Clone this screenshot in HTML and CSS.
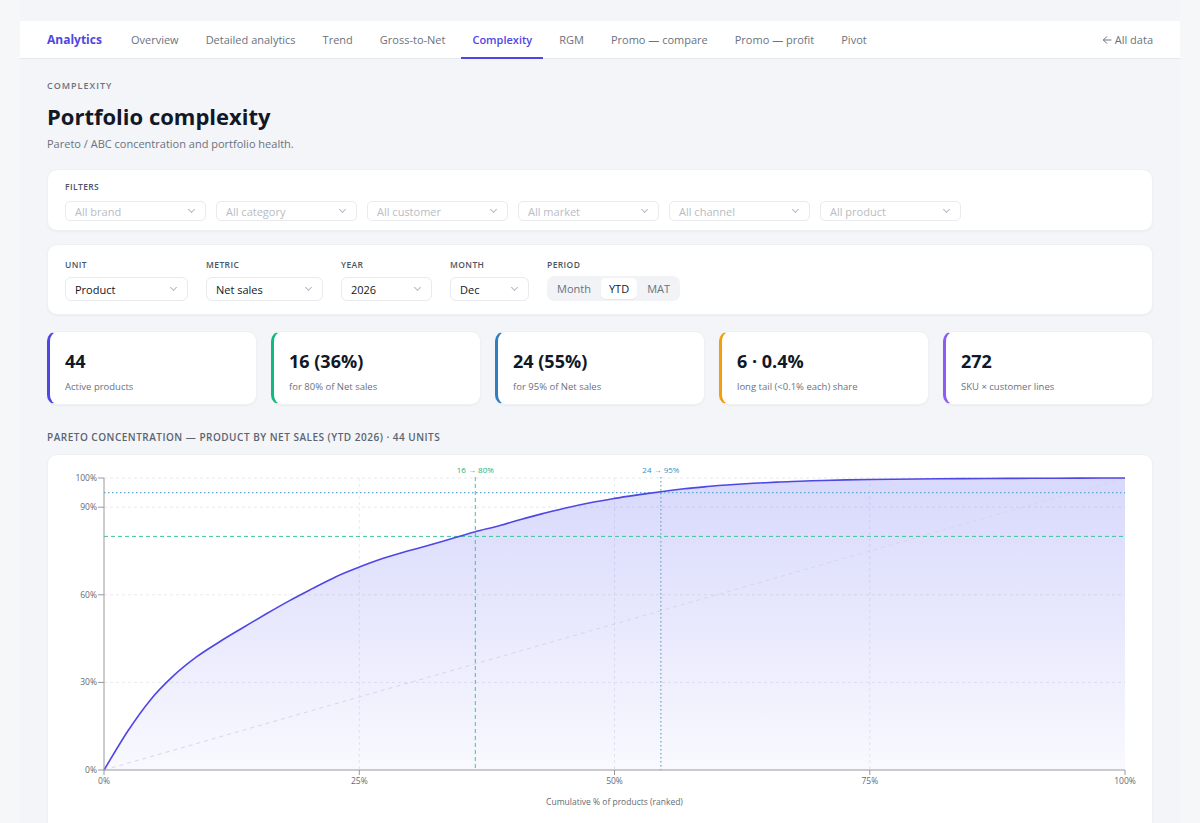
FILE: index.html
```html
<!DOCTYPE html>
<html lang="en">
<head>
<meta charset="utf-8">
<title>Portfolio complexity</title>
<link rel="stylesheet" href="styles.css">
</head>
<body>
<div class="frame">
  <nav class="topnav">
    <a class="brand">Analytics</a>
    <div class="tabs">
      <a class="tab">Overview</a>
      <a class="tab">Detailed analytics</a>
      <a class="tab">Trend</a>
      <a class="tab">Gross-to-Net</a>
      <a class="tab active">Complexity</a>
      <a class="tab">RGM</a>
      <a class="tab">Promo — compare</a>
      <a class="tab">Promo — profit</a>
      <a class="tab">Pivot</a>
    </div>
    <a class="back"><svg class="back-ico" viewBox="0 0 10 10" width="10" height="10"><path d="M9 5H1.5M4.8 1.6L1.4 5l3.4 3.4"/></svg>All data</a>
  </nav>

  <main class="content">
    <div class="eyebrow">COMPLEXITY</div>
    <h1 class="title">Portfolio complexity</h1>
    <p class="sub">Pareto / ABC concentration and portfolio health.</p>

    <section class="card filters">
      <div class="card-label">FILTERS</div>
      <div class="filter-row">
        <div class="fsel"><span>All brand</span><i class="chev"></i></div>
        <div class="fsel"><span>All category</span><i class="chev"></i></div>
        <div class="fsel"><span>All customer</span><i class="chev"></i></div>
        <div class="fsel"><span>All market</span><i class="chev"></i></div>
        <div class="fsel"><span>All channel</span><i class="chev"></i></div>
        <div class="fsel"><span>All product</span><i class="chev"></i></div>
      </div>
    </section>

    <section class="card controls">
      <div class="ctrl">
        <div class="ctrl-label">UNIT</div>
        <div class="csel w-unit"><span>Product</span><i class="chev"></i></div>
      </div>
      <div class="ctrl">
        <div class="ctrl-label">METRIC</div>
        <div class="csel w-metric"><span>Net sales</span><i class="chev"></i></div>
      </div>
      <div class="ctrl">
        <div class="ctrl-label">YEAR</div>
        <div class="csel w-year"><span>2026</span><i class="chev"></i></div>
      </div>
      <div class="ctrl">
        <div class="ctrl-label">MONTH</div>
        <div class="csel w-month"><span>Dec</span><i class="chev"></i></div>
      </div>
      <div class="ctrl">
        <div class="ctrl-label">PERIOD</div>
        <div class="seg">
          <span class="seg-btn">Month</span>
          <span class="seg-btn on">YTD</span>
          <span class="seg-btn">MAT</span>
        </div>
      </div>
    </section>

    <div class="kpis">
      <div class="kpi k-indigo"><div class="kpi-val">44</div><div class="kpi-lbl">Active products</div></div>
      <div class="kpi k-green"><div class="kpi-val">16 (36%)</div><div class="kpi-lbl">for 80% of Net sales</div></div>
      <div class="kpi k-blue"><div class="kpi-val">24 (55%)</div><div class="kpi-lbl">for 95% of Net sales</div></div>
      <div class="kpi k-amber"><div class="kpi-val">6 · 0.4%</div><div class="kpi-lbl">long tail (&lt;0.1% each) share</div></div>
      <div class="kpi k-violet"><div class="kpi-val">272</div><div class="kpi-lbl">SKU × customer lines</div></div>
    </div>

    <h2 class="section-title">PARETO CONCENTRATION — PRODUCT BY NET SALES (YTD 2026) · 44 UNITS</h2>

    <div class="card chart">
      <svg class="pareto" viewBox="0 0 1106 380" width="1106" height="380">
        <defs>
          <linearGradient id="areaGrad" x1="0" y1="0" x2="0" y2="1">
            <stop offset="0" stop-color="#6366f1" stop-opacity="0.25"/>
            <stop offset="1" stop-color="#6366f1" stop-opacity="0.04"/>
          </linearGradient>
        </defs>
        <g class="grid">
          <line x1="56" y1="23" x2="1077" y2="23"/>
          <line x1="56" y1="52.2" x2="1077" y2="52.2"/>
          <line x1="56" y1="139.8" x2="1077" y2="139.8"/>
          <line x1="56" y1="227.4" x2="1077" y2="227.4"/>
          <line x1="311.3" y1="23" x2="311.3" y2="315"/>
          <line x1="566.5" y1="23" x2="566.5" y2="315"/>
          <line x1="821.8" y1="23" x2="821.8" y2="315"/>
        </g>
        <path class="area" d="M56,315 C59.9,308.7 71.5,288.7 79.2,277 S94.7,254.3 102.4,244.9 S117.9,227.9 125.6,220.7 S141.1,207.4 148.8,201.7 S164.3,191.4 172,186.5 S187.5,177.1 195.2,172.5 S210.7,163.3 218.4,158.8 S233.9,149.8 241.6,145.6 S257.1,137.4 264.8,133.4 S280.3,125.3 288,121.7 S303.6,115.1 311.3,112.1 S326.8,106.2 334.5,103.6 S350,98.8 357.7,96.6 S373.2,92.4 380.9,90.2 S396.4,85.7 404.1,83.4 S419.6,78.8 427.3,76.7 S442.8,73 450.5,70.9 S466,66.4 473.7,64.2 S489.2,60 496.9,58 S512.4,54.3 520.1,52.5 S535.6,49 543.3,47.5 S558.8,44.7 566.5,43.4 S582,41 589.7,39.9 S605.2,37.7 612.9,36.7 S628.4,34.7 636.1,33.8 S651.6,32.2 659.3,31.5 S674.8,30.2 682.5,29.7 S698,28.7 705.7,28.3 S721.2,27.5 728.9,27.1 S744.4,26.5 752.1,26.2 S767.6,25.7 775.3,25.5 L798.5,24.9 L821.8,24.5 L845,24.2 L868.2,24 L891.4,23.8 L914.6,23.6 L937.8,23.5 L961,23.4 L984.2,23.3 L1007.4,23.2 L1030.6,23.1 L1053.8,23 L1077,23 L1077,315 Z"/>
        <line class="diag" x1="56" y1="315" x2="1077" y2="23"/>
        <line class="th80" x1="56" y1="81.4" x2="1077" y2="81.4"/>
        <line class="th80" x1="427.3" y1="22" x2="427.3" y2="315"/>
        <line class="th95" x1="56" y1="37.6" x2="1077" y2="37.6"/>
        <line class="th95" x1="612.9" y1="22" x2="612.9" y2="315"/>
        <text class="th80-lbl" x="427.3" y="18">16 → 80%</text>
        <text class="th95-lbl" x="612.9" y="18">24 → 95%</text>
        <path class="curve" d="M56,315 C59.9,308.7 71.5,288.7 79.2,277 S94.7,254.3 102.4,244.9 S117.9,227.9 125.6,220.7 S141.1,207.4 148.8,201.7 S164.3,191.4 172,186.5 S187.5,177.1 195.2,172.5 S210.7,163.3 218.4,158.8 S233.9,149.8 241.6,145.6 S257.1,137.4 264.8,133.4 S280.3,125.3 288,121.7 S303.6,115.1 311.3,112.1 S326.8,106.2 334.5,103.6 S350,98.8 357.7,96.6 S373.2,92.4 380.9,90.2 S396.4,85.7 404.1,83.4 S419.6,78.8 427.3,76.7 S442.8,73 450.5,70.9 S466,66.4 473.7,64.2 S489.2,60 496.9,58 S512.4,54.3 520.1,52.5 S535.6,49 543.3,47.5 S558.8,44.7 566.5,43.4 S582,41 589.7,39.9 S605.2,37.7 612.9,36.7 S628.4,34.7 636.1,33.8 S651.6,32.2 659.3,31.5 S674.8,30.2 682.5,29.7 S698,28.7 705.7,28.3 S721.2,27.5 728.9,27.1 S744.4,26.5 752.1,26.2 S767.6,25.7 775.3,25.5 L798.5,24.9 L821.8,24.5 L845,24.2 L868.2,24 L891.4,23.8 L914.6,23.6 L937.8,23.5 L961,23.4 L984.2,23.3 L1007.4,23.2 L1030.6,23.1 L1053.8,23 L1077,23"/>
        <g class="axis">
          <line x1="56" y1="23" x2="56" y2="315"/>
          <line x1="56" y1="315" x2="1077" y2="315"/>
          <line x1="50" y1="23" x2="56" y2="23"/>
          <line x1="50" y1="52.2" x2="56" y2="52.2"/>
          <line x1="50" y1="139.8" x2="56" y2="139.8"/>
          <line x1="50" y1="227.4" x2="56" y2="227.4"/>
          <line x1="50" y1="315" x2="56" y2="315"/>
          <line x1="56" y1="315" x2="56" y2="320"/>
          <line x1="311.3" y1="315" x2="311.3" y2="320"/>
          <line x1="566.5" y1="315" x2="566.5" y2="320"/>
          <line x1="821.8" y1="315" x2="821.8" y2="320"/>
          <line x1="1077" y1="315" x2="1077" y2="320"/>
        </g>
        <g class="ylbl">
          <text x="49" y="26">100%</text>
          <text x="49" y="55.2">90%</text>
          <text x="49" y="142.8">60%</text>
          <text x="49" y="230.4">30%</text>
          <text x="49" y="318">0%</text>
        </g>
        <g class="xlbl">
          <text x="56" y="329">0%</text>
          <text x="311.3" y="329">25%</text>
          <text x="566.5" y="329">50%</text>
          <text x="821.8" y="329">75%</text>
          <text x="1077" y="329">100%</text>
        </g>
        <text class="xtitle" x="566.5" y="350">Cumulative % of products (ranked)</text>
      </svg>
    </div>
  </main>
</div>
</body>
</html>
```

FILE: styles.css
```css
* { box-sizing: border-box; }

html, body {
  margin: 0;
  padding: 0;
  background: #f6f7f9;
  font-family: "Segoe UI", "Open Sans", "Noto Sans", sans-serif;
  color: #111827;
}

.frame {
  margin: 0 20px;
  background: #f3f5f8;
  min-height: 823px;
  padding-top: 21px;
}

/* top navigation */
.topnav {
  height: 38px;
  background: #ffffff;
  border-bottom: 1px solid #e7e9ee;
  display: flex;
  align-items: stretch;
  padding: 0 27px;
}
.brand {
  display: flex;
  align-items: center;
  font-size: 12px;
  font-weight: 700;
  color: #4f46e5;
  margin-right: 18px;
}
.tabs {
  display: flex;
  align-items: stretch;
  gap: 5px;
  flex: 1;
}
.tab {
  display: flex;
  align-items: center;
  padding: 0 11px;
  font-size: 11px;
  color: #6b7280;
  border-bottom: 2px solid transparent;
  margin-bottom: -1px;
}
.tab.active {
  color: #4f46e5;
  font-weight: 600;
  border-bottom-color: #4f46e5;
}
.back {
  display: flex;
  align-items: center;
  gap: 3px;
  font-size: 11px;
  color: #6b7280;
}
.back-ico {
  display: block;
  fill: none;
  stroke: #6b7280;
  stroke-width: 1;
  stroke-linecap: round;
  stroke-linejoin: round;
}

/* content */
.content {
  padding: 21px 27px 0;
}
.eyebrow {
  font-size: 9px;
  line-height: 12px;
  letter-spacing: 1px;
  color: #6b7280;
  font-weight: 600;
}
.title {
  margin: 9px 0 0;
  font-size: 22px;
  line-height: 30px;
  font-weight: 700;
  color: #111827;
}
.sub {
  margin: 5px 0 0;
  font-size: 11px;
  line-height: 16px;
  color: #6b7280;
}

.card {
  background: #ffffff;
  border-radius: 10px;
  border: 1px solid #eef0f3;
  box-shadow: 0 1px 2px rgba(16, 24, 40, 0.04);
}

/* filters */
.filters {
  margin-top: 17px;
  padding: 11px 17px 9px;
}
.card-label {
  font-size: 8.5px;
  line-height: 12px;
  font-weight: 600;
  letter-spacing: 0.4px;
  color: #4b5563;
}
.filter-row {
  display: flex;
  gap: 10px;
  margin-top: 8px;
}
.fsel {
  width: 141px;
  height: 20px;
  border: 1px solid #e8eaee;
  border-radius: 5px;
  display: flex;
  align-items: center;
  justify-content: space-between;
  padding: 0 11px 0 9px;
  font-size: 11px;
  color: #b8bcc4;
}
.chev {
  width: 5px;
  height: 5px;
  border-right: 1px solid #b5b9c1;
  border-bottom: 1px solid #b5b9c1;
  transform: rotate(45deg);
  margin-top: -3px;
}

/* controls */
.controls {
  margin-top: 13px;
  padding: 14px 17px 13px;
  display: flex;
  gap: 18px;
}
.ctrl-label {
  font-size: 8.5px;
  line-height: 12px;
  font-weight: 600;
  letter-spacing: 0.4px;
  color: #4b5563;
}
.csel {
  margin-top: 6px;
  height: 24px;
  border: 1px solid #e8eaee;
  border-radius: 6px;
  display: flex;
  align-items: center;
  justify-content: space-between;
  padding: 0 11px 0 9px;
  font-size: 11px;
  color: #111827;
}
.w-unit { width: 123px; }
.w-metric { width: 117px; }
.w-year { width: 91px; }
.w-month { width: 79px; }

.seg {
  margin-top: 5px;
  height: 25px;
  background: #f1f3f6;
  border-radius: 7px;
  padding: 2px;
  display: flex;
  gap: 2px;
}
.seg-btn {
  display: flex;
  align-items: center;
  padding: 0 8px;
  font-size: 11px;
  color: #6b7280;
  border-radius: 5px;
}
.seg-btn.on {
  background: #ffffff;
  color: #111827;
  box-shadow: 0 1px 1px rgba(16, 24, 40, 0.05);
}

/* KPI cards */
.kpis {
  margin-top: 16px;
  display: grid;
  grid-template-columns: repeat(5, 1fr);
  gap: 14px;
}
.kpi {
  height: 74px;
  background: #ffffff;
  border-radius: 10px;
  border: 1px solid #eef0f3;
  border-left: 3px solid #4f46e5;
  box-shadow: 0 1px 2px rgba(16, 24, 40, 0.04);
  padding: 17px 15px 0;
}
.k-indigo { border-left-color: #4f46e5; }
.k-green { border-left-color: #10b981; }
.k-blue { border-left-color: #2f7fc1; }
.k-amber { border-left-color: #f59e0b; }
.k-violet { border-left-color: #8b5cf6; }
.kpi-val {
  font-size: 18px;
  line-height: 24px;
  font-weight: 700;
  color: #111827;
}
.kpi-lbl {
  margin-top: 7px;
  font-size: 9.5px;
  line-height: 13px;
  color: #6b7280;
}

.section-title {
  margin: 25px 0 0;
  font-size: 10px;
  line-height: 14px;
  font-weight: 600;
  letter-spacing: 0.5px;
  color: #5b6472;
}

/* chart */
.chart {
  margin-top: 10px;
  height: 400px;
  overflow: hidden;
}
.pareto {
  display: block;
}
.grid line {
  stroke: #e9e9ef;
  stroke-width: 1;
  stroke-dasharray: 3 3;
}
.area {
  fill: url(#areaGrad);
}
.diag {
  stroke: #d8d5ea;
  stroke-width: 1;
  stroke-dasharray: 4 4;
}
.th80 {
  stroke: #3cc59b;
  stroke-width: 1;
  stroke-dasharray: 4 3;
}
.th95 {
  stroke: #5ea8cf;
  stroke-width: 1.2;
  stroke-dasharray: 1.5 2.5;
}
.th80-lbl, .th95-lbl {
  font-size: 8px;
  text-anchor: middle;
}
.th80-lbl { fill: #22b07d; }
.th95-lbl { fill: #3a8fbf; }
.curve {
  fill: none;
  stroke: #4f46e5;
  stroke-width: 1.6;
  stroke-linejoin: round;
}
.axis line {
  stroke: #9a9a9a;
  stroke-width: 1;
}
.ylbl text {
  font-size: 8.5px;
  fill: #666a70;
  text-anchor: end;
}
.xlbl text {
  font-size: 8.5px;
  fill: #666a70;
  text-anchor: middle;
}
.xtitle {
  font-size: 8.5px;
  fill: #666a70;
  text-anchor: middle;
}
```
